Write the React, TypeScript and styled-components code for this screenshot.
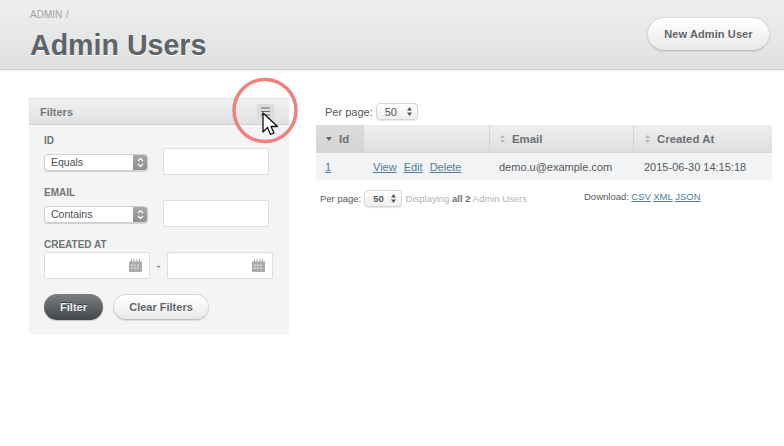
import React from 'react';
import styled, { createGlobalStyle } from 'styled-components';

const Global = createGlobalStyle`
  html, body { margin: 0; padding: 0; background: #fff; }
  body { width: 784px; height: 446px; overflow: hidden; font-family: "Liberation Sans", Arial, sans-serif; color: #5e6469; }
  #root { position: relative; width: 784px; height: 446px; overflow: hidden; }
`;

const Header = styled.header`
  height: 70px; box-sizing: border-box; display: flex; justify-content: space-between; align-items: flex-start;
  padding: 9px 14px 0 30px;
  background: linear-gradient(180deg, #efefef 0%, #dfe0e0 100%);
  border-bottom: 1px solid #cfcfcf;
  box-shadow: 0 1px 1px rgba(0,0,0,.05);
`;
const Crumbs = styled.div`font-size: 10px; line-height: 11px; color: #a2a2a2; word-spacing: 1px;`;
const Title = styled.h1`margin: 9px 0 0; font-size: 28.6px; line-height: 32px; font-weight: 700; color: #5e6469; text-shadow: 0 1px 0 #fff;`;

const PillButton = styled.button`
  font-family: inherit; font-weight: 700; font-size: 11px; color: #5e6469; border: 1px solid #d6d6d6; border-bottom-color: #c2c2c2; border-radius: 200px;
  background: linear-gradient(180deg, #ffffff 0%, #e9e9e9 100%);
  box-shadow: 0 1px 1px rgba(0,0,0,.1), inset 0 1px 0 #fff; padding: 0; text-shadow: 0 1px 0 #fff;
  text-align: center;
`;
const NewButton = styled(PillButton)`width: 123px; height: 34px; margin-top: 8px; letter-spacing: .1px;`;

const Content = styled.div`display: flex; align-items: flex-start; padding: 28px 12px 0 29px; gap: 27px;`;

const Sidebar = styled.aside`width: 260px; height: 236px; background: #f4f4f4; flex: none; box-shadow: 0 0 1px rgba(0,0,0,.12);`;
const PanelHead = styled.div`
  height: 27px; box-sizing: border-box; display: flex; align-items: center; justify-content: space-between; padding: 0 15px 0 11px;
  background: linear-gradient(180deg, #f0f0f0, #e0e1e2); border-bottom: 1px solid #d3d3d3; border-top: 1px solid #e4e4e4;
  font-size: 11px; font-weight: 700; color: #777c80;
`;
const MenuIcon = styled.div`width: 17px; height: 15px; background: #dcdcdc; display: flex; align-items: center; justify-content: center;`;
const PanelBody = styled.div`padding: 10px 16px 0 15px; display: flex; flex-direction: column;`;
const FieldLabel = styled.div`font-size: 10px; font-weight: 700; line-height: 12px; color: #6f7477;`;
const FieldRow = styled.div`display: flex; align-items: flex-start; margin-top: 1px; margin-bottom: 11px; height: 28px;`;
const SelectBox = styled.div`
  box-sizing: border-box; width: 104px; height: 17px; margin-top: 6px; border: 1px solid #cfcfcf; border-radius: 4px; background: #fff; display: flex; justify-content: space-between; align-items: stretch; overflow: hidden;
  font-size: 10.5px; line-height: 15px; color: #4d4f51; padding-left: 6px; flex: none; box-shadow: 0 1px 1px rgba(0,0,0,.15);
`;
const Stepper = styled.div`width: 14px; background: linear-gradient(180deg, #a8a8a8, #8f8f8f); display: flex; align-items: center; justify-content: center;`;
const TextField = styled.div`box-sizing: border-box; width: 106px; height: 27px; margin-left: 15px; background: #fff; border: 1px solid #dedede; border-radius: 2px; flex: none;`;
const DateRow = styled.div`display: flex; align-items: flex-start; height: 28px; margin-top: 1px;`;
const DateField = styled.div`box-sizing: border-box; width: 106px; height: 27px; background: #fff; border: 1px solid #dedede; border-radius: 2px; display: flex; align-items: center; justify-content: flex-end; padding-right: 7px; flex: none;`;
const Dash = styled.span`width: 18px; line-height: 27px; text-align: center; font-size: 10px; color: #777; font-weight: 700;`;
const Actions = styled.div`display: flex; gap: 10px; margin-top: 14px;`;
const FilterButton = styled.button`
  width: 59px; height: 26px; border: none; border-radius: 200px; padding: 0; font-family: inherit; font-weight: 700; font-size: 11px; color: #efefef;
  background: linear-gradient(180deg, #7a7f83 0%, #42474a 100%); box-shadow: 0 1px 1px rgba(0,0,0,.2); text-shadow: 0 -1px 0 #333;
`;
const ClearButton = styled(PillButton)`width: 96px; height: 26px;`;

const Main = styled.main`width: 456px; flex: none; display: flex; flex-direction: column;`;
const PerPageTop = styled.div`display: flex; align-items: center; gap: 3px; height: 19px; padding-left: 9px; margin-top: 4px; font-size: 11px; color: #55595c;`;
const PageSelect = styled.div<{ $small?: boolean }>`
  width: ${p => (p.$small ? 39 : 42)}px; height: 17px; box-sizing: border-box; border: 1px solid #d4d4d4; border-radius: 4px;
  background: linear-gradient(180deg, #fff, #efefef); box-shadow: 0 1px 1px rgba(0,0,0,.1);
  display: flex; align-items: center; justify-content: space-between; padding: 0 4px 0 8px;
  font-size: ${p => (p.$small ? 9.5 : 11)}px; font-weight: ${p => (p.$small ? 700 : 400)}; color: #55595c;
`;
const Table = styled.div`margin-top: 4px; display: flex; flex-direction: column; background: #f1f3f4;`;
const HeadRow = styled.div`display: grid; grid-template-columns: 48px 126px 144px 138px; height: 28px; background: linear-gradient(180deg, #efefef, #dedede); border-bottom: 1px solid #d4d4d4; box-sizing: border-box;`;
const HeadCell = styled.div<{ $sorted?: boolean }>`
  display: flex; align-items: center; gap: ${p => (p.$sorted ? 7 : 7)}px; padding-left: 10px; font-size: 11.4px; font-weight: 700; color: #6b7074;
  border-right: 1px solid #d4d4d4; background: ${p => (p.$sorted ? 'linear-gradient(180deg,#dddddd,#d4d4d4)' : 'transparent')};
  &:last-child { border-right: none; padding-left: 11px; }
`;
const BodyRow = styled.div`display: grid; grid-template-columns: 48px 126px 144px 138px; height: 27px; align-items: center; font-size: 11px; color: #55595c;`;
const BodyCell = styled.div`padding-left: 9px; display: flex; gap: 7px; white-space: nowrap;`;
const DateCell = styled(BodyCell)`padding-left: 10px;`;
const Link = styled.a`color: #4f7d9b; text-decoration: underline;`;
const Footer = styled.div`display: flex; align-items: center; height: 20px; margin-top: 8px; padding-left: 4px; font-size: 9.5px; color: #55595c;`;
const FooterPer = styled.div`display: flex; align-items: center; gap: 3px; width: 207px; flex: none; white-space: nowrap;`;
const Dim = styled.span`color: #b2b5b7; margin-left: 1px; white-space: pre;`;
const Bold = styled.b`color: #6c7073;`;
const Download = styled.div`display: flex; gap: 2.4px; margin-top: -4px; margin-left: 57px; white-space: nowrap;`;

const Overlay = styled.svg`position: absolute; left: 227px; top: 74px; pointer-events: none;`;

const Updown = ({ color = '#fff', h = 11 }: { color?: string; h?: number }) => (
  <svg width="7" height={h} viewBox="0 0 7 11"><path d="M1 4 3.500 1.500 6 4M1 7l2.500 2.500L6 7" fill="none" stroke={color} strokeWidth="1.2" /></svg>
);
const SolidUpdown = () => (
  <svg width="7" height="11" viewBox="0 0 7 11"><path d="M3.500 1 6 4.500H1zM3.500 10 1 6.500h5z" fill="#555" /></svg>
);
const SortHint = () => (
  <svg width="5" height="8" viewBox="0 0 5 8"><path d="M2.500 0 5 3H0zM2.500 8 0 5h5z" fill="#b5b5b5" /></svg>
);
const Calendar = () => (
  <svg width="13" height="13" viewBox="0 0 13 13">
    <path d="M0 2.500h2V0h1v2.500h1.500V0h1v2.500h2V0h1v2.500H10V0h1v2.500h2V13H0z" fill="#a9abac" />
    <path d="M2 5.500h1.500V7H2zM5 5.500h1.500V7H5zM8 5.500h1.500V7H8zM2 8.500h1.500V10H2zM5 8.500h1.500V10H5zM8 8.500h1.500V10H8z" fill="#e6e6e6" />
  </svg>
);

export default function App() {
  return (
    <>
      <Global />
      <Header>
        <div>
          <Crumbs>ADMIN /</Crumbs>
          <Title>Admin Users</Title>
        </div>
        <NewButton>New Admin User</NewButton>
      </Header>
      <Content>
        <Sidebar>
          <PanelHead>
            <span>Filters</span>
            <MenuIcon>
              <svg width="11" height="9" viewBox="0 0 11 9"><path d="M1 1h9M1 4.500h9M1 8h9" stroke="#6a6a6a" strokeWidth="1" /></svg>
            </MenuIcon>
          </PanelHead>
          <PanelBody>
            <FieldLabel>ID</FieldLabel>
            <FieldRow>
              <SelectBox>Equals<Stepper><Updown /></Stepper></SelectBox>
              <TextField />
            </FieldRow>
            <FieldLabel>EMAIL</FieldLabel>
            <FieldRow>
              <SelectBox>Contains<Stepper><Updown /></Stepper></SelectBox>
              <TextField />
            </FieldRow>
            <FieldLabel>CREATED AT</FieldLabel>
            <DateRow>
              <DateField><Calendar /></DateField>
              <Dash>-</Dash>
              <DateField><Calendar /></DateField>
            </DateRow>
            <Actions>
              <FilterButton>Filter</FilterButton>
              <ClearButton>Clear Filters</ClearButton>
            </Actions>
          </PanelBody>
        </Sidebar>
        <Main>
          <PerPageTop>Per page: <PageSelect>50<SolidUpdown /></PageSelect></PerPageTop>
          <Table>
            <HeadRow>
              <HeadCell $sorted>
                <svg width="6" height="4" viewBox="0 0 6 4"><path d="M0 0h6L3 4z" fill="#666" /></svg>Id
              </HeadCell>
              <HeadCell />
              <HeadCell><SortHint />Email</HeadCell>
              <HeadCell><SortHint />Created At</HeadCell>
            </HeadRow>
            <BodyRow>
              <BodyCell><Link>1</Link></BodyCell>
              <BodyCell><Link>View</Link><Link>Edit</Link><Link>Delete</Link></BodyCell>
              <BodyCell>demo.u@example.com</BodyCell>
              <DateCell>2015-06-30 14:15:18</DateCell>
            </BodyRow>
          </Table>
          <Footer>
            <FooterPer>
              Per page: <PageSelect $small>50<SolidUpdown /></PageSelect>
              <Dim>Displaying <Bold>all 2</Bold> Admin Users</Dim>
            </FooterPer>
            <Download>Download: <Link>CSV</Link> <Link>XML</Link> <Link>JSON</Link></Download>
          </Footer>
        </Main>
      </Content>
      <Overlay width="76" height="76" viewBox="0 0 76 76">
        <circle cx="38" cy="36.500" r="31" fill="none" stroke="#ef8080" strokeWidth="3.500" />
        <path d="M36 39v19l4.500-4.500 3 7 3.500-1.500-3-6.500h6.500z" fill="#fff" stroke="#111" strokeWidth="1.300" strokeLinejoin="round" />
      </Overlay>
    </>
  );
}
